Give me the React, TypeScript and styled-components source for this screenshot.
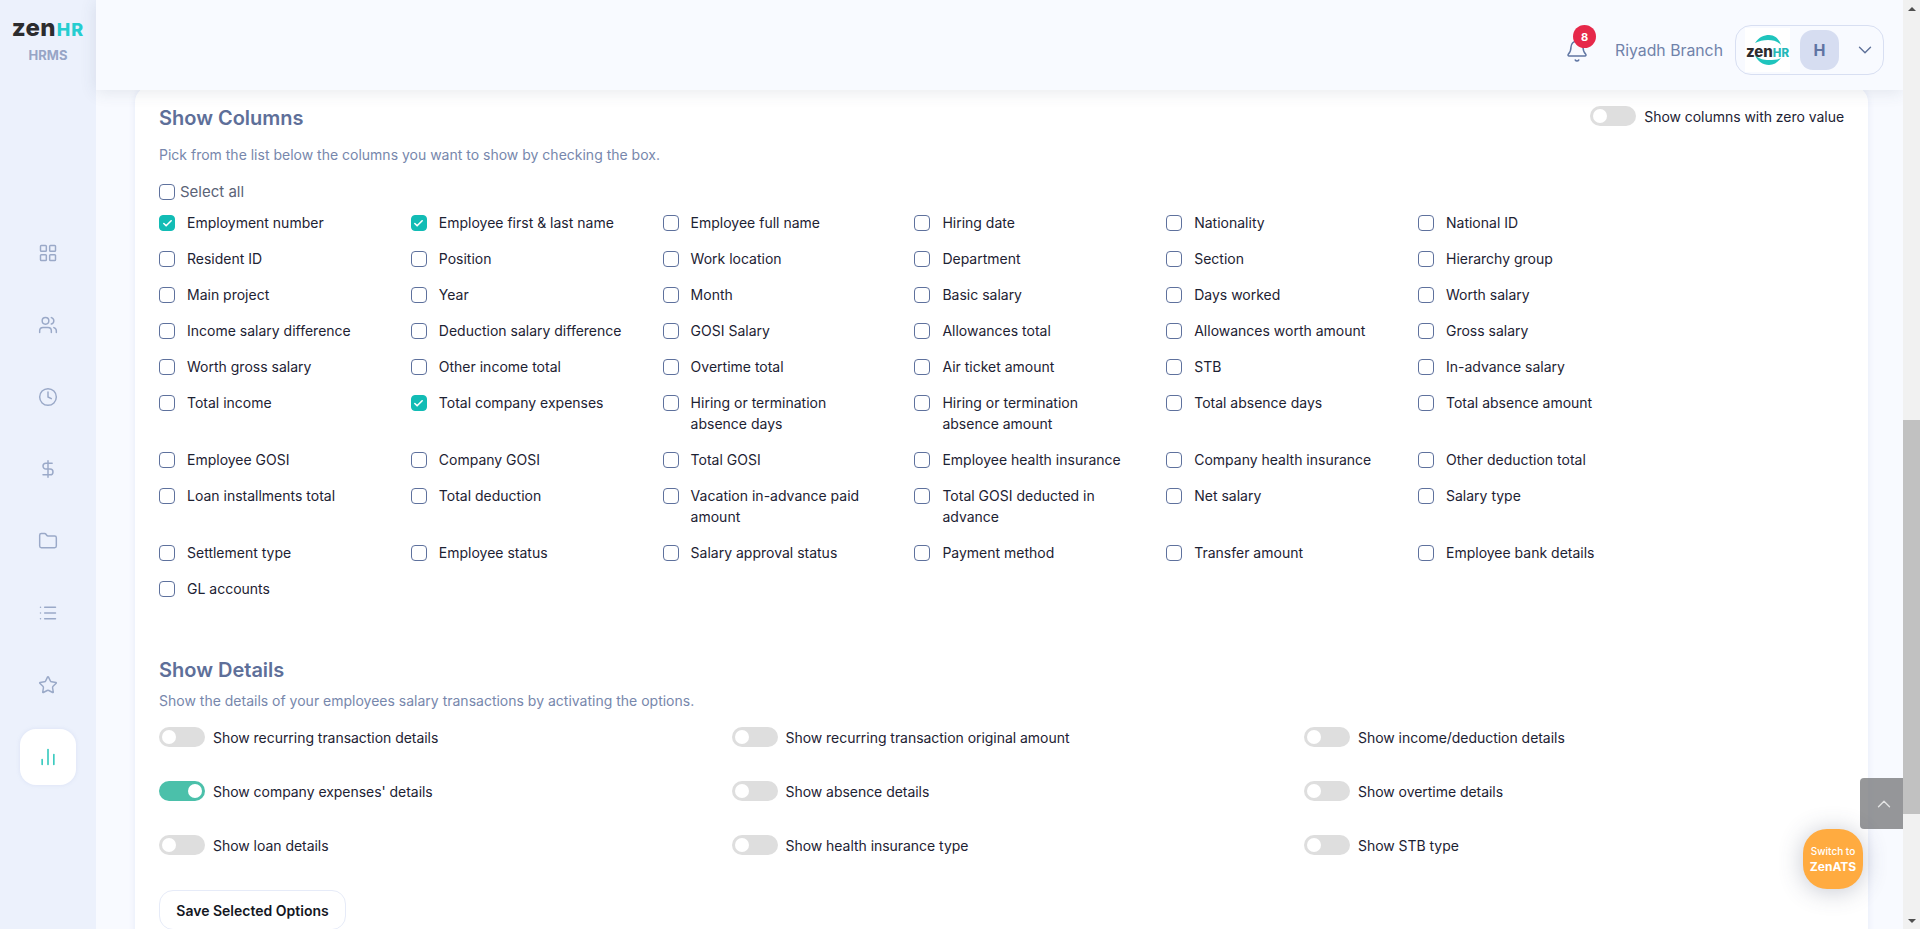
import React from 'react';
import styled, { createGlobalStyle } from 'styled-components';
import {
  Bell,
  Check,
  ChartNoAxesColumn,
  ChevronDown,
  ChevronUp,
  Clock,
  DollarSign,
  Folder,
  LayoutGrid,
  List,
  Star,
  Users,
} from 'lucide-react';

const GlobalStyle = createGlobalStyle`
  html, body {
    margin: 0;
    padding: 0;
    height: 929px;
    overflow: hidden;
    background: #f8faff;
    font-family: Inter, "Noto Sans", sans-serif;
  }
  * { box-sizing: border-box; }
`;

const Page = styled.div`
  display: flex;
  width: 1920px;
  height: 929px;
  position: relative;
  overflow: hidden;
`;

const Sidebar = styled.aside`
  width: 96px;
  flex: none;
  background: #ecf1fc;
  display: flex;
  flex-direction: column;
  align-items: center;
  padding-top: 16px;
`;

const LogoWord = styled.div`
  font-size: 24px;
  line-height: 24px;
  font-weight: 800;
  letter-spacing: 0.3px;
  color: #2c2c2e;
`;

const LogoAccent = styled.span`
  color: #25cdd0;
  font-size: 18px;
  letter-spacing: 1px;
  margin-left: 1px;
`;

const LogoSub = styled.div`
  margin-top: 5px;
  font-size: 13px;
  line-height: 16px;
  font-weight: 700;
  color: #97a5c6;
`;

const SideNav = styled.nav`
  margin-top: 162px;
  display: flex;
  flex-direction: column;
  align-items: center;
  gap: 16px;
`;

const SideItem = styled.div<{ $active?: boolean }>`
  width: 56px;
  height: 56px;
  border-radius: 16px;
  display: flex;
  align-items: center;
  justify-content: center;
  color: ${p => (p.$active ? '#3ccbc0' : '#9aa9c8')};
  background: ${p => (p.$active ? '#fff' : 'transparent')};
  box-shadow: ${p => (p.$active ? '0 0 4px rgba(120, 140, 200, 0.15)' : 'none')};
`;

const Main = styled.div`
  flex: 1;
  min-width: 0;
  display: flex;
  flex-direction: column;
`;

const Header = styled.header`
  height: 90px;
  flex: none;
  background: #f8faff;
  box-shadow: 0 2px 16px rgba(60, 70, 100, 0.12);
  position: relative;
  z-index: 5;
  display: flex;
  align-items: center;
  justify-content: flex-end;
  padding: 10px 19px 0 0;
`;

const BellWrap = styled.div`
  position: relative;
  width: 24px;
  height: 24px;
  margin-right: 26px;
  margin-top: 2px;
  color: #6076a3;
`;

const Badge = styled.span`
  position: absolute;
  top: -14px;
  left: 8px;
  width: 23px;
  height: 23px;
  border-radius: 50%;
  background: #e6284a;
  color: #fff;
  font-size: 11px;
  font-weight: 700;
  display: flex;
  align-items: center;
  justify-content: center;
`;

const Branch = styled.span`
  font-size: 15.8px;
  color: #7082aa;
  margin-right: 12px;
`;

const ProfileBox = styled.div`
  width: 149px;
  height: 50px;
  border: 1px solid #d8dff2;
  border-radius: 16px;
  display: flex;
  align-items: center;
  padding-left: 9px;
  color: #5d7099;
`;

const MiniLogo = styled.div`
  width: 45px;
  height: 44px;
  background: #fff;
  display: flex;
  align-items: center;
  justify-content: center;
  position: relative;
  flex: none;
`;

const MiniRing = styled.svg`
  position: absolute;
  inset: 0;
`;

const MiniWord = styled.span`
  position: relative;
  top: 1px;
  font-size: 15px;
  font-weight: 800;
  color: #2c2c2e;
  white-space: nowrap;
`;

const MiniAccent = styled.span`
  color: #25b8b8;
  font-size: 11.5px;
`;

const Avatar = styled.div`
  width: 39px;
  height: 40px;
  margin-left: 10px;
  border-radius: 13px;
  background: #d6ddf1;
  color: #5f74a3;
  font-size: 16px;
  font-weight: 700;
  display: flex;
  align-items: center;
  justify-content: center;
`;

const ProfileChevron = styled.div`
  margin-left: 15px;
  display: flex;
`;

const Content = styled.main`
  flex: 1;
  min-height: 0;
  overflow: hidden;
  padding: 0 35px 0 39px;
`;

const Card = styled.section`
  margin-top: -4px;
  background: #fff;
  border-radius: 16px;
  box-shadow: 0 0 6px rgba(120, 140, 200, 0.15);
  padding: 18px 24px 40px;
  height: 900px;
`;

const TitleRow = styled.div`
  display: flex;
  align-items: flex-start;
  justify-content: space-between;
`;

const TitleToggle = styled.div`
  margin-top: 2px;
`;

const Title = styled.h2`
  margin: 0;
  font-size: 20px;
  line-height: 28px;
  font-weight: 600;
  color: #5e6f99;
`;

const Hint = styled.p`
  margin: 0;
  font-size: 14px;
  line-height: 21px;
  color: #7787ac;
`;

const ColumnsHint = styled(Hint)`
  margin-top: 12px;
`;

const DetailsHint = styled(Hint)`
  margin-top: 6px;
`;

const SelectAll = styled.label`
  display: flex;
  align-items: center;
  gap: 5px;
  margin-top: 16px;
  font-size: 15px;
  line-height: 21px;
  color: #5b6377;
`;

const ColumnsGrid = styled.div`
  margin-top: 10px;
  display: grid;
  grid-template-columns: repeat(6, 251.8px);
  row-gap: 15px;
  align-items: start;
`;

const ColumnItem = styled.label`
  display: flex;
  align-items: flex-start;
  gap: 12px;
  font-size: 14px;
  line-height: 21px;
  color: #1d2233;
`;

const ColumnLabel = styled.span`
  width: 190px;
`;

const Box = styled.span<{ $checked?: boolean }>`
  width: 16px;
  height: 16px;
  flex: none;
  margin-top: 3px;
  border-radius: 4px;
  border: 1px solid ${p => (p.$checked ? '#12bcb5' : '#5e719d')};
  background: ${p => (p.$checked ? '#12bcb5' : '#fff')};
  color: #fff;
  display: flex;
  align-items: center;
  justify-content: center;
`;

const BareBox = styled(Box)`
  margin-top: 0;
`;

const DetailsSection = styled.div`
  margin-top: 57px;
`;

const DetailsGrid = styled.div`
  margin-top: 16px;
  display: grid;
  grid-template-columns: repeat(3, 572.5px);
  row-gap: 34px;
`;

const SwitchRow = styled.div`
  display: flex;
  align-items: center;
  gap: 8px;
  height: 20px;
  font-size: 14px;
  letter-spacing: -0.04px;
  color: #1d2233;
`;

const Track = styled.span<{ $on?: boolean }>`
  width: 46px;
  height: 20px;
  flex: none;
  border-radius: 10px;
  background: ${p => (p.$on ? '#4bc0aa' : '#dedede')};
  display: flex;
  align-items: center;
  justify-content: ${p => (p.$on ? 'flex-end' : 'flex-start')};
  padding: 0 3px;
`;

const Knob = styled.span`
  width: 14px;
  height: 14px;
  border-radius: 50%;
  background: #fff;
`;

const SaveButton = styled.button`
  margin-top: 35px;
  width: 187px;
  height: 40px;
  background: #fff;
  border: 1px solid #e6ebf8;
  border-radius: 14px;
  font-family: inherit;
  font-size: 14px;
  font-weight: 600;
  color: #14171f;
`;

const Scrollbar = styled.div`
  width: 17px;
  flex: none;
  background: #f1f1f1;
  display: flex;
  flex-direction: column;
  position: relative;
  z-index: 6;
`;

const ScrollArrow = styled.div<{ $down?: boolean }>`
  height: 17px;
  flex: none;
  display: flex;
  align-items: center;
  justify-content: center;

  &::before {
    content: '';
    border-left: 4px solid transparent;
    border-right: 4px solid transparent;
    ${p =>
      p.$down ? 'border-top: 4px solid #505050;' : 'border-bottom: 4px solid #505050;'}
  }
`;

const ScrollTrack = styled.div`
  flex: 1;
  padding-top: 403px;
`;

const ScrollThumb = styled.div`
  height: 394px;
  background: #c1c1c1;
`;

const BackToTop = styled.div`
  position: absolute;
  left: 1860px;
  top: 778px;
  width: 43px;
  height: 51px;
  padding-left: 4px;
  border-radius: 4px 0 0 4px;
  background: rgba(120, 122, 124, 0.78);
  color: #e4e4e4;
  display: flex;
  align-items: center;
  justify-content: center;
  z-index: 7;
`;

const SwitchApp = styled.div`
  position: absolute;
  left: 1803px;
  top: 829px;
  width: 60px;
  height: 60px;
  border-radius: 24px;
  background: #ffab40;
  box-shadow: 0 2px 24px rgba(60, 70, 100, 0.3);
  color: #fff;
  display: flex;
  flex-direction: column;
  align-items: center;
  justify-content: center;
  z-index: 8;
`;

const SwitchTop = styled.span`
  font-size: 10px;
  line-height: 15px;
  font-weight: 500;
`;

const SwitchName = styled.span`
  font-size: 12px;
  line-height: 15px;
  font-weight: 700;
`;

const columns: [string, boolean?][] = [
  ['Employment number', true],
  ['Employee first & last name', true],
  ['Employee full name'],
  ['Hiring date'],
  ['Nationality'],
  ['National ID'],
  ['Resident ID'],
  ['Position'],
  ['Work location'],
  ['Department'],
  ['Section'],
  ['Hierarchy group'],
  ['Main project'],
  ['Year'],
  ['Month'],
  ['Basic salary'],
  ['Days worked'],
  ['Worth salary'],
  ['Income salary difference'],
  ['Deduction salary difference'],
  ['GOSI Salary'],
  ['Allowances total'],
  ['Allowances worth amount'],
  ['Gross salary'],
  ['Worth gross salary'],
  ['Other income total'],
  ['Overtime total'],
  ['Air ticket amount'],
  ['STB'],
  ['In-advance salary'],
  ['Total income'],
  ['Total company expenses', true],
  ['Hiring or termination absence days'],
  ['Hiring or termination absence amount'],
  ['Total absence days'],
  ['Total absence amount'],
  ['Employee GOSI'],
  ['Company GOSI'],
  ['Total GOSI'],
  ['Employee health insurance'],
  ['Company health insurance'],
  ['Other deduction total'],
  ['Loan installments total'],
  ['Total deduction'],
  ['Vacation in-advance paid amount'],
  ['Total GOSI deducted in advance'],
  ['Net salary'],
  ['Salary type'],
  ['Settlement type'],
  ['Employee status'],
  ['Salary approval status'],
  ['Payment method'],
  ['Transfer amount'],
  ['Employee bank details'],
  ['GL accounts'],
];

const details: [string, boolean?][] = [
  ['Show recurring transaction details'],
  ['Show recurring transaction original amount'],
  ['Show income/deduction details'],
  ["Show company expenses' details", true],
  ['Show absence details'],
  ['Show overtime details'],
  ['Show loan details'],
  ['Show health insurance type'],
  ['Show STB type'],
];

const navIcons = [LayoutGrid, Users, Clock, DollarSign, Folder, List, Star];

const Toggle: React.FC<{ label: string; on?: boolean }> = ({ label, on }) => (
  <SwitchRow>
    <Track $on={on}>
      <Knob />
    </Track>
    {label}
  </SwitchRow>
);

const App: React.FC = () => (
  <Page>
    <GlobalStyle />
    <Sidebar>
      <LogoWord>
        zen<LogoAccent>HR</LogoAccent>
      </LogoWord>
      <LogoSub>HRMS</LogoSub>
      <SideNav>
        {navIcons.map((Icon, i) => (
          <SideItem key={i}>
            <Icon size={20} strokeWidth={1.75} />
          </SideItem>
        ))}
        <SideItem $active>
          <ChartNoAxesColumn size={20} strokeWidth={2} />
        </SideItem>
      </SideNav>
    </Sidebar>

    <Main>
      <Header>
        <BellWrap>
          <Bell size={24} strokeWidth={1.5} />
          <Badge>8</Badge>
        </BellWrap>
        <Branch>Riyadh Branch</Branch>
        <ProfileBox>
          <MiniLogo>
            <MiniRing width="45" height="44" viewBox="0 0 45 44" fill="#1fc4bd">
              <path d="M10 15 C14 9 19 7 24 7 C30 7 34 11 36 17 C32 13 28 12 23 12 C18 12 14 13 10 15 Z" />
              <path d="M10 27 C12 33 18 37 24 37 C29 37 33 34 36 30 C32 32 28 32 24 32 C18 32 14 31 10 27 Z" />
            </MiniRing>
            <MiniWord>
              zen<MiniAccent>HR</MiniAccent>
            </MiniWord>
          </MiniLogo>
          <Avatar>H</Avatar>
          <ProfileChevron>
            <ChevronDown size={22} strokeWidth={1.5} />
          </ProfileChevron>
        </ProfileBox>
      </Header>

      <Content>
        <Card>
          <TitleRow>
            <Title>Show Columns</Title>
            <TitleToggle>
              <Toggle label="Show columns with zero value" />
            </TitleToggle>
          </TitleRow>
          <ColumnsHint>Pick from the list below the columns you want to show by checking the box.</ColumnsHint>
          <SelectAll>
            <BareBox />
            Select all
          </SelectAll>
          <ColumnsGrid>
            {columns.map(([label, checked]) => (
              <ColumnItem key={label}>
                <Box $checked={checked}>{checked && <Check size={11} strokeWidth={3.5} />}</Box>
                <ColumnLabel>{label}</ColumnLabel>
              </ColumnItem>
            ))}
          </ColumnsGrid>

          <DetailsSection>
            <Title>Show Details</Title>
            <DetailsHint>Show the details of your employees salary transactions by activating the options.</DetailsHint>
            <DetailsGrid>
              {details.map(([label, on]) => (
                <Toggle key={label} label={label} on={on} />
              ))}
            </DetailsGrid>
            <SaveButton>Save Selected Options</SaveButton>
          </DetailsSection>
        </Card>
      </Content>
    </Main>

    <Scrollbar>
      <ScrollArrow />
      <ScrollTrack>
        <ScrollThumb />
      </ScrollTrack>
      <ScrollArrow $down />
    </Scrollbar>

    <BackToTop>
      <ChevronUp size={22} strokeWidth={1.5} />
    </BackToTop>
    <SwitchApp>
      <SwitchTop>Switch to</SwitchTop>
      <SwitchName>ZenATS</SwitchName>
    </SwitchApp>
  </Page>
);

export default App;
